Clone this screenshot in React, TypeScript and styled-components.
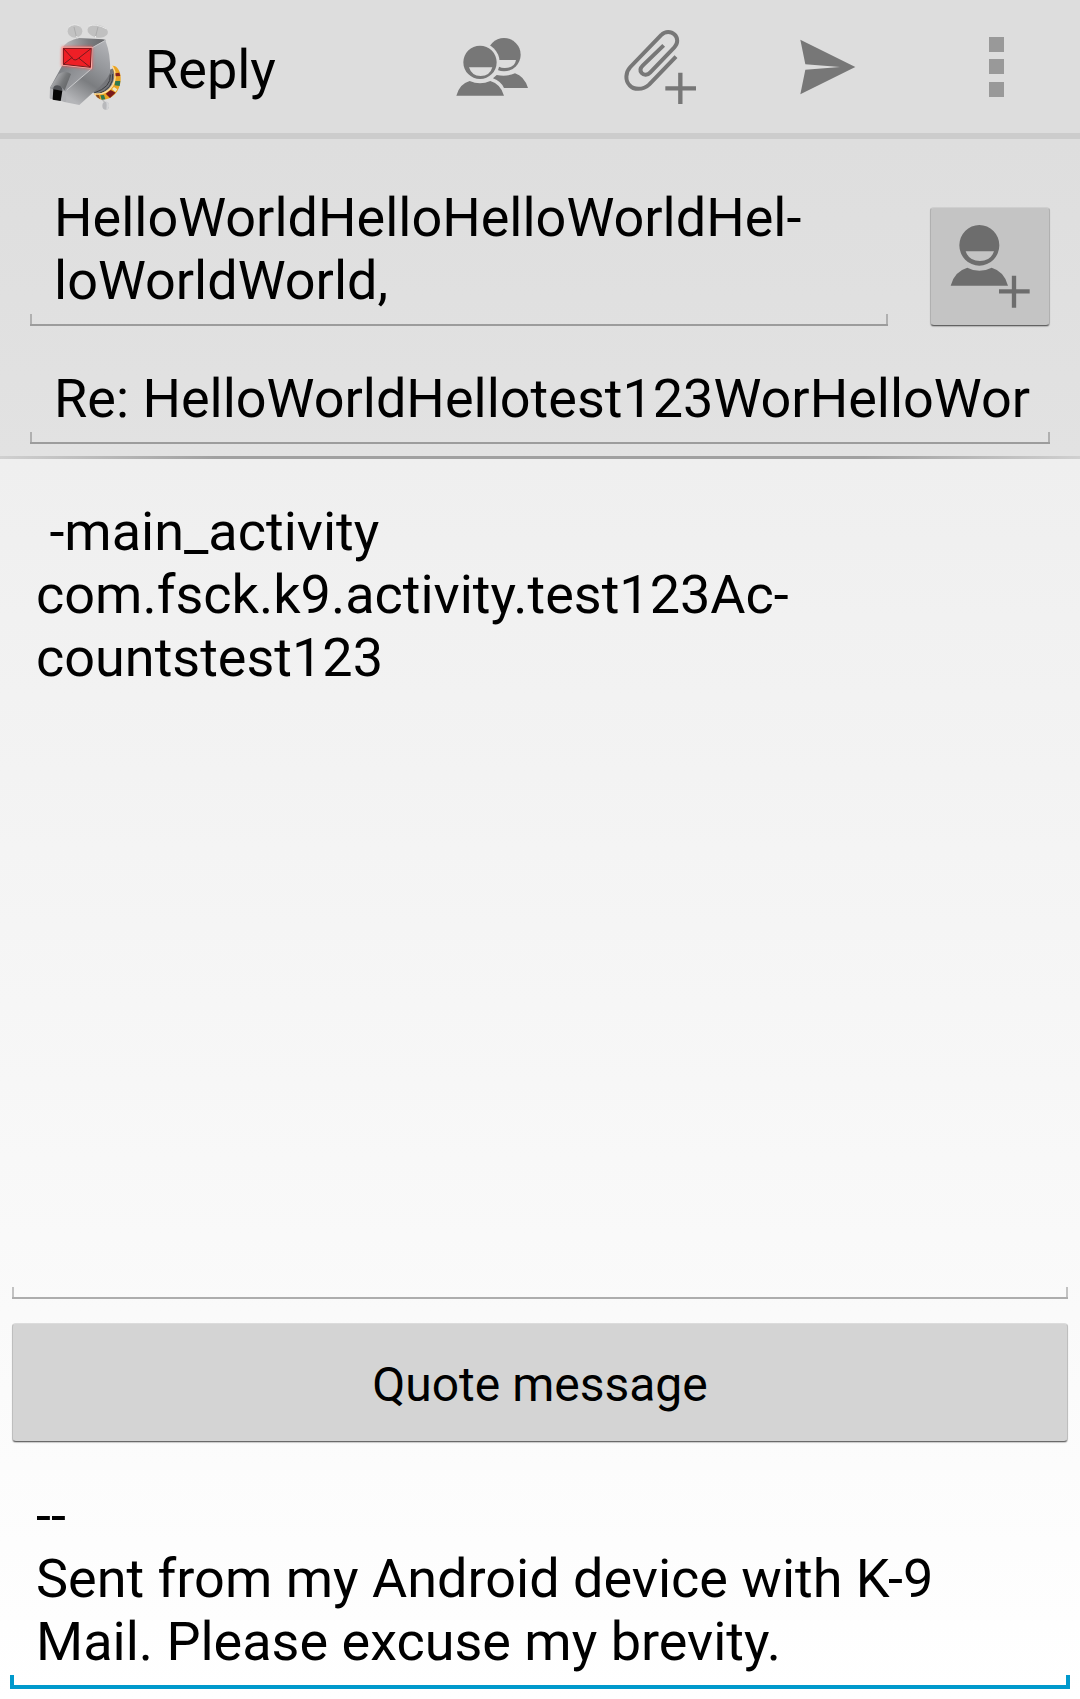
import React, { useState } from "react";
import styled, { createGlobalStyle, css } from "styled-components";

const GlobalStyle = createGlobalStyle`
  *, *::before, *::after { box-sizing: border-box; }
  body {
    margin: 0;
    color: #000;
    font-family: Roboto, "Noto Sans", sans-serif;
  }
`;

const Page = styled.div`
  display: flex;
  flex-direction: column;
  min-height: 100vh;
  background: linear-gradient(#e9e9e9, #ffffff);
`;

const ActionBar = styled.header`
  display: flex;
  align-items: stretch;
  height: 139px;
  padding-left: 36px;
  background: #dddddd;
  border-bottom: 6px solid #cccccc;
`;

const Brand = styled.div`
  display: flex;
  align-items: center;
  flex: 1;
  gap: 13px;
`;

const Title = styled.h1`
  margin: 0;
  padding-top: 6px;
  font-size: 54px;
  line-height: 63px;
  font-weight: 400;
`;

const Actions = styled.nav`
  display: flex;
`;

const ActionButton = styled.button`
  display: flex;
  align-items: center;
  justify-content: center;
  width: 168px;
  padding: 0;
  border: 0;
  background: none;
  color: #777777;
  cursor: pointer;
`;

const BarIcon = styled.svg`
  display: block;
  width: 96px;
  height: 133px;
`;

const AddressPanel = styled.section`
  display: flex;
  flex-direction: column;
  gap: 18px;
  padding: 24px 30px 12px;
  background: linear-gradient(#dedede, #e2e2e2);
`;

const RecipientRow = styled.div`
  display: flex;
  align-items: flex-end;
  gap: 42px;
`;

const Divider = styled.hr`
  width: 100%;
  height: 3px;
  margin: 0;
  border: 0;
  background: linear-gradient(90deg, #d0d0d0, #a0a0a0 20%, #a0a0a0 80%, #d0d0d0);
`;

type FieldProps = { $line: string; $tick: string; $weight: number };

const fieldStyle = css<FieldProps>`
  display: block;
  width: 100%;
  min-width: 0;
  margin: 0;
  padding: 23px 24px 14px;
  border: 0;
  border-radius: 0;
  outline: none;
  resize: none;
  overflow: hidden;
  color: #000;
  font-family: inherit;
  font-size: 54px;
  line-height: 63px;
  background-color: transparent;
  background-repeat: no-repeat;
  background-image: linear-gradient(${(p) => p.$line}, ${(p) => p.$line}),
    linear-gradient(${(p) => p.$tick}, ${(p) => p.$tick}),
    linear-gradient(${(p) => p.$tick}, ${(p) => p.$tick});
  background-position: left bottom, left bottom, right bottom;
  background-size: 100% ${(p) => p.$weight}px,
    ${(p) => p.$weight}px ${(p) => p.$weight + 10}px,
    ${(p) => p.$weight}px ${(p) => p.$weight + 10}px;
`;

const TextField = styled.input<FieldProps>`
  ${fieldStyle}
  height: 100px;
  padding-right: 18px;
`;

const TextArea = styled.textarea<FieldProps>`
  ${fieldStyle}
`;

const MessageArea = styled(TextArea)`
  flex: 1;
`;

const SignatureArea = styled(TextArea)`
  padding: 23px 26px 16px;
`;

const PushButton = styled.button`
  display: flex;
  align-items: center;
  justify-content: center;
  flex-shrink: 0;
  min-height: 119px;
  padding: 0;
  border: 1px solid rgba(0, 0, 0, 0.1);
  border-top-color: rgba(255, 255, 255, 0.2);
  border-bottom-color: rgba(0, 0, 0, 0.5);
  border-radius: 4px;
  color: #000;
  font-family: inherit;
  font-size: 48px;
  line-height: 56px;
  cursor: pointer;
  box-shadow: 0 1px 1px rgba(0, 0, 0, 0.2);
`;

const ContactButton = styled(PushButton)`
  width: 120px;
  background: #c4c4c4;
  color: #6d6d6d;
`;

const ContactIcon = styled.svg`
  display: block;
  width: 118px;
  height: 117px;
`;

const QuoteButton = styled(PushButton)`
  width: 100%;
  margin: 24px 0 19px;
  padding-top: 5px;
  background: #d4d4d4;
`;

const Composer = styled.main`
  display: flex;
  flex: 1;
  flex-direction: column;
  padding: 18px 12px 0;
`;

const SignatureBox = styled.div`
  padding: 0 10px 10px;
`;

function DogLogo() {
  return (
    <BarIcon viewBox="108 0 288 399" aria-hidden="true">
      <defs>
        <linearGradient id="muzzle" x1="190" y1="205" x2="250" y2="260" gradientUnits="userSpaceOnUse">
          <stop offset="0" stopColor="#808286" />
          <stop offset="0.35" stopColor="#8e9094" />
          <stop offset="1" stopColor="#a2a3a7" />
        </linearGradient>
        <linearGradient id="cheek" x1="215" y1="300" x2="325" y2="130" gradientUnits="userSpaceOnUse">
          <stop offset="0" stopColor="#b4b5b8" />
          <stop offset="0.35" stopColor="#7b7d80" />
          <stop offset="0.65" stopColor="#96989c" />
          <stop offset="1" stopColor="#b2b3b7" />
        </linearGradient>
        <linearGradient id="crown" x1="190" y1="130" x2="315" y2="120" gradientUnits="userSpaceOnUse">
          <stop offset="0" stopColor="#bcbcbe" />
          <stop offset="0.6" stopColor="#7c7d80" />
          <stop offset="1" stopColor="#66676a" />
        </linearGradient>
        <linearGradient id="nose" x1="165" y1="230" x2="205" y2="252" gradientUnits="userSpaceOnUse">
          <stop offset="0" stopColor="#aeafb2" />
          <stop offset="0.6" stopColor="#77797b" />
          <stop offset="1" stopColor="#66686a" />
        </linearGradient>
        <filter id="glow" x="-30%" y="-30%" width="160%" height="160%">
          <feGaussianBlur stdDeviation="5" />
        </filter>
      </defs>
      <ellipse cx="225" cy="94" rx="22" ry="19" fill="#c2c2c2" />
      <path d="M207 80Q222 69 239 78" fill="none" stroke="#e6e6e6" strokeWidth="3" />
      <ellipse cx="293" cy="94" rx="31" ry="19" transform="rotate(11 293 94)" fill="#c0c0c0" />
      <path d="M266 78Q289 70 318 86" fill="none" stroke="#e6e6e6" strokeWidth="3" />
      <path d="M222 81L232 122M294 81L283 124" stroke="#a0a0a0" strokeWidth="2" />
      <path d="M230 108L233 124M287 108L283 125" stroke="#eeeeee" strokeWidth="3" />
      <path d="M303 294L315 308" stroke="#bcbcbc" strokeWidth="4" />
      <ellipse cx="317" cy="317" rx="10" ry="12" fill="#b8b9bc" />
      <path d="M318 304Q329 308 327 320Q324 328 319 329Q322 316 318 304Z" fill="#d4d5d7" />
      <path d="M327 210L342 204Q352 264 296 284L276 276Z" fill="#75767a" />
      <path d="M331 224Q334 262 282 279M338 222Q342 266 292 283" fill="none" stroke="#3b3d40" strokeWidth="3" />
      <path
        d="M337 197C352 196 364 215 362 241C359 280 332 303 299 298L281 281C313 283 337 266 342 240C344 224 341 210 337 197Z"
        fill="#eba421"
      />
      <path d="M337 198C349 216 348 240 338 257C326 276 304 284 283 282" fill="none" stroke="#ffdf9f" strokeWidth="4" />
      <path d="M346 220L358 218L361 228L347 229Z" fill="#8a211e" />
      <path d="M346 243L361 243L359 258L344 256Z" fill="#2f7950" />
      <path d="M342 261L352 268L346 276L336 267Z" fill="#ece6c4" />
      <path d="M332 270L347 278L330 294L317 281Z" fill="#7a191b" />
      <path d="M301 286L312 285L316 298L305 299Z" fill="#2f7950" />
      <path d="M288 284L297 285L300 297L290 291Z" fill="#8a4a1e" />
      <path d="M186 145Q202 120 238 114L309 118L318 120L276 145Z" fill="url(#crown)" />
      <path d="M276 144L316 121Q333 164 330 218Q321 242 280 277L238 315L193 306L195 272L275 204Z" fill="url(#cheek)" />
      <path d="M187 196L275 204L198 272L196 305L150 295L150 263Z" fill="url(#muzzle)" />
      <path d="M150 264L176 222Q196 210 213 222L194 271L183 260Z" fill="url(#nose)" />
      <path d="M150 264L160 268L158 298L149 295ZM187 271L200 275L197 306L183 303Z" fill="#b0b1b4" />
      <path d="M159 269Q160 256 172 256Q187 257 187 272Z" fill="#505256" />
      <path d="M160 268L187 272L182 303L158 299Z" fill="#050505" />
      <path d="M275 144L316 121M275 206L200 270" stroke="#c8c9cb" strokeWidth="3" fill="none" />
      <path d="M186 140H277V206L185 197Z" fill="#ff4a4a" opacity="0.85" filter="url(#glow)" />
      <path d="M187 142H275L274 204L187 195Z" fill="#ef1f26" stroke="#ffaaa5" strokeWidth="4" />
      <path d="M190 145H274L271 202L190 193ZM190 145L221 179Q228 182 234 176L274 145M190 193L217 172M271 202L237 175" fill="none" stroke="#76191d" strokeWidth="3" />
    </BarIcon>
  );
}

function PeopleIcon() {
  return (
    <BarIcon viewBox="72 0 288 399" fill="currentColor" aria-hidden="true">
      <mask id="behind" maskUnits="userSpaceOnUse" x="72" y="0" width="288" height="399">
        <rect x="72" width="288" height="399" fill="#fff" />
        <circle cx="180" cy="187" r="59" fill="#000" />
        <path d="M237 180H288Q284 204 254 204Q244 204 237 200Z" fill="#000" />
      </mask>
      <circle cx="252" cy="164" r="50" mask="url(#behind)" />
      <path d="M219 235L230 225Q260 231 285 220Q312 228 324 264H252Q243 244 219 235Z" />
      <path
        fillRule="evenodd"
        d="M130 187a50 50 0 1 0 100 0a50 50 0 1 0-100 0ZM147 202H217Q210 228 182 228Q155 228 147 202Z"
      />
      <path d="M109 287Q119 251 149 243Q180 257 211 243Q242 252 252 287Z" />
    </BarIcon>
  );
}

function AttachIcon() {
  return (
    <BarIcon viewBox="576 0 288 399" fill="none" stroke="currentColor" strokeWidth="12" aria-hidden="true">
      <path d="M768 170L688 253C668 272 640 269 629 256C615 242 616 217 631 201L724 105C736 92 754 94 763 103C775 114 774 131 763 142L691 217C683 226 671 226 665 219C659 212 661 204 668 197L731 136" />
      <path d="M736 265H828M781 218V312" strokeWidth="13" />
    </BarIcon>
  );
}

function SendIcon() {
  return (
    <BarIcon viewBox="60 0 288 399" fill="currentColor" aria-hidden="true">
      <path d="M121 119L286 201L121 283L136 209L240 201L136 193Z" />
    </BarIcon>
  );
}

function OverflowIcon() {
  return (
    <BarIcon viewBox="564 0 288 399" fill="#999999" aria-hidden="true">
      <path d="M687 111h45v45h-45zM687 177h45v45h-45zM687 246h45v45h-45z" />
    </BarIcon>
  );
}

function AddContactIcon() {
  return (
    <ContactIcon viewBox="453 114 354 351" fill="currentColor" aria-hidden="true">
      <path
        fillRule="evenodd"
        d="M538 226a60 61 0 1 0 120 0a60 61 0 1 0-120 0ZM557 244H642Q632 273 600 273Q567 273 557 244Z"
      />
      <path d="M512 347Q523 304 562 293Q598 312 635 293Q673 304 684 347Z" />
      <path d="M657 364H749M702 317V413" stroke="currentColor" strokeWidth="13" />
    </ContactIcon>
  );
}

const idle = { $line: "#9c9c9c", $tick: "#b0b0b0", $weight: 2 };
const idleLight = { $line: "#adadad", $tick: "#c2c2c2", $weight: 2 };
const focused = { $line: "#0099cc", $tick: "#0099cc", $weight: 4 };

export default function App() {
  const [recipients, setRecipients] = useState("HelloWorldHelloHelloWorldHel-\nloWorldWorld,");
  const [subject, setSubject] = useState("Re: HelloWorldHellotest123WorHelloWor");
  const [message, setMessage] = useState(
    " -main_activity\ncom.fsck.k9.activity.test123Ac-\ncountstest123"
  );
  const [signature, setSignature] = useState(
    "--\nSent from my Android device with K-9 Mail. Please excuse my brevity."
  );

  return (
    <Page>
      <GlobalStyle />
      <ActionBar>
        <Brand>
          <DogLogo />
          <Title>Reply</Title>
        </Brand>
        <Actions aria-label="Message actions">
          <ActionButton type="button" aria-label="Add Cc/Bcc"><PeopleIcon /></ActionButton>
          <ActionButton type="button" aria-label="Add attachment"><AttachIcon /></ActionButton>
          <ActionButton type="button" aria-label="Send"><SendIcon /></ActionButton>
          <ActionButton type="button" aria-label="More options"><OverflowIcon /></ActionButton>
        </Actions>
      </ActionBar>
      <AddressPanel>
        <RecipientRow>
          <TextArea aria-label="To" rows={2} spellCheck={false} {...idle} value={recipients}
            onChange={(e) => setRecipients(e.target.value)} />
          <ContactButton type="button" aria-label="Add from contacts"><AddContactIcon /></ContactButton>
        </RecipientRow>
        <TextField aria-label="Subject" type="text" spellCheck={false} {...idle} value={subject}
          onChange={(e) => setSubject(e.target.value)} />
      </AddressPanel>
      <Divider />
      <Composer>
        <MessageArea aria-label="Message text" rows={3} spellCheck={false} {...idleLight} value={message}
          onChange={(e) => setMessage(e.target.value)} />
        <QuoteButton type="button">Quote message</QuoteButton>
      </Composer>
      <SignatureBox>
        <SignatureArea aria-label="Signature" rows={3} spellCheck={false} {...focused} value={signature}
          onChange={(e) => setSignature(e.target.value)} />
      </SignatureBox>
    </Page>
  );
}
